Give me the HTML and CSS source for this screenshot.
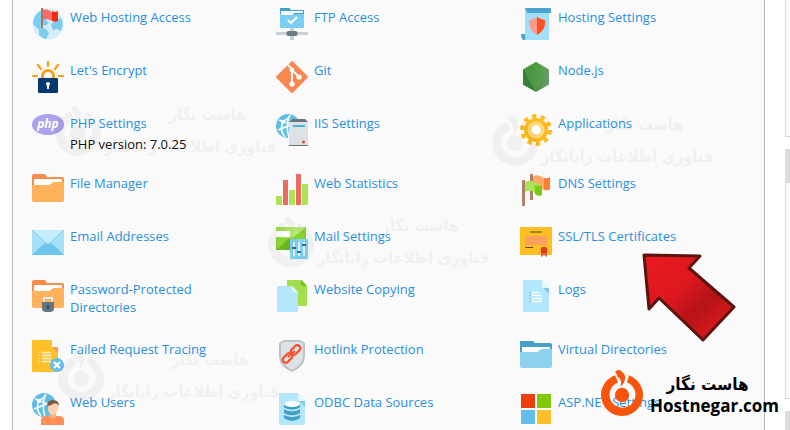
FILE: index.html
```html
<!DOCTYPE html>
<html lang="en">

<head>
    <meta charset="UTF-8">
    <meta name="viewport" content="width=device-width, initial-scale=1.0">
    <title>Websites &amp; Domains</title>

    <link rel="stylesheet" href="styles.css">
</head>

<body>
    <!-- shared shapes -->
    <svg class="defs" aria-hidden="true">
        <defs>
            <linearGradient id="nodeFill" x1="0" y1="0" x2="1" y2="0">
                <stop offset="0.3" stop-color="#3c873a"/>
                <stop offset="1" stop-color="#6f9f6c"/>
            </linearGradient>
            <linearGradient id="arrowFill" x1="0" y1="0" x2="1" y2="1">
                <stop offset="0" stop-color="#ea1a20"/>
                <stop offset="0.4" stop-color="#dc181e"/>
                <stop offset="0.62" stop-color="#b41318"/>
                <stop offset="0.85" stop-color="#d8181c"/>
            </linearGradient>
            <linearGradient id="mailFill" x1="0" y1="0" x2="1" y2="0">
                <stop offset="0" stop-color="#9bdd4a"/>
                <stop offset="1" stop-color="#c8ee8c"/>
            </linearGradient>
            <symbol id="mark" viewBox="0 0 44 46">
                <path d="M15 5.200A21 21 0 1 0 29 5.200L27 12.500A13 13 0 1 1 18 12.500Z"/>
                <circle cx="22" cy="25" r="7.200"/>
                <path d="M15 2C18 -1 21 0 22 2C26 4 27 10 20.500 17C22 11 20.500 8 17 6.500C17 4 16 3 15 2Z"/>
            </symbol>
            <symbol id="globe" viewBox="0 0 24 24">
                <circle cx="12" cy="12" r="12" fill="#5ebde6"/>
                <path d="M3 6Q10 9 14 1M2 16Q12 11 23 9M14 1Q9 11 13 24M7 8Q3 16 9 23M7 8Q14 8 22 18" fill="none" stroke="#fafafa" stroke-width="1.6"/>
                <circle cx="7" cy="8" r="2" fill="#fafafa"/>
            </symbol>
        </defs>
    </svg>

    <div class="page">
        <main class="panel">
            <ul class="tools">
                <li class="tool">
                    <svg class="icon" viewBox="0 0 32 32"><circle cx="16" cy="16" r="15.5" fill="#d3eefa"/><path d="M2 10Q6 2 12 2L17 4L18 9L14 12L17 15L13 18L10 16L8 18L14 21L17 25L14 31Q10 30 7 27L7 22L4 19L1 16ZM22 13L29 10L31 16L29 23L25 21L21 22L19 17Z" fill="#7ccdec"/><path d="M10 2Q15 0 18 3T26 3V13Q22 14 18 12T10 12Z" fill="#ff6b6b"/><path d="M20 3Q23 5 26 3V13Q23 14 20 13Z" fill="#f02c10"/><path d="M9 0H11V20H9Z" fill="#a5785f"/></svg>
                    <div><a href="#">Web Hosting Access</a></div>
                </li>
                <li class="tool">
                    <svg class="icon" viewBox="0 0 32 32"><path d="M4 1Q4 0 5 0H13L15 2H27Q28 2 28 3V19Q28 20 27 20H5Q4 20 4 19Z" fill="#79cff3"/><path d="M4 1Q4 0 5 0H13L15 2H28V6H4Z" fill="#469fc8"/><path d="M5 3H27V5H18L16 7H5Z" fill="#fff"/><path d="M12 12L15 15L21 9" fill="none" stroke="#fff" stroke-width="2"/><path d="M0 24H32V27H0ZM14 20H18V32H14Z" fill="#c7d0d5"/><path d="M12 23H20L21.500 24V27L20 28H12L10.500 27V24Z" fill="#6c7a84"/></svg>
                    <div><a href="#">FTP Access</a></div>
                </li>
                <li class="tool">
                    <svg class="icon" viewBox="0 0 32 32"><path d="M5 0H29V32H3L5 28Z" fill="#a0e0fa"/><path d="M5 0H30Q31 0 31 1V5H28V5H7Z" fill="#4ba3d0"/><path d="M1 26H5V32H3Q1 30 1 26Z" fill="#4ba3d0"/><path d="M17 9Q22 12 25 12Q26 22 17 27Q8 22 9 12Q13 12 17 9Z" fill="#ff9a8b"/><path d="M17 9Q22 12 25 12Q26 22 17 27Z" fill="#ff5022"/></svg>
                    <div><a href="#">Hosting Settings</a></div>
                </li>

                <li class="tool">
                    <svg class="icon" viewBox="0 0 32 32"><path d="M10.500 18V15A5.500 5.500 0 0 1 21.500 15V18" fill="none" stroke="#f9a01b" stroke-width="3"/><path d="M16 1V5M6 4L9 8M26 4L23 8M1 15H5M27 15H31" stroke="#f9a01b" stroke-width="2.200" stroke-linecap="round"/><rect x="6" y="17" width="20" height="15" rx="1" fill="#003a70"/><circle cx="16" cy="23" r="2" fill="#fff"/><path d="M15 23H17V28H15Z" fill="#fff"/></svg>
                    <div><a href="#">Let's Encrypt</a></div>
                </li>
                <li class="tool">
                    <svg class="icon" viewBox="0 0 32 32"><path d="M14.500 1.500Q16 -1 17.500 1L31 14.500Q33 16 31 17.500L17.500 31Q16 33 14.500 31L1 17.500Q-1 16 1 14.500Z" fill="#f88750"/><path d="M12 4L16 8V23M16 9L23 16" fill="none" stroke="#fff" stroke-width="1.800"/><circle cx="16" cy="9" r="2.400" fill="#fff"/><circle cx="16" cy="23" r="2.600" fill="#fff"/><circle cx="23" cy="16" r="2.600" fill="#fff"/></svg>
                    <div><a href="#">Git</a></div>
                </li>
                <li class="tool">
                    <svg class="icon" viewBox="0 0 32 32"><path d="M16 1L29 8.500V23.500L16 31L3 23.500V8.500Z" fill="url(#nodeFill)"/><path d="M16 1L26 7L17 30L3 23.500V8.500Z" fill="#55a344" opacity="0.600"/><path d="M4 9L15 30L3 23.500V8.500Z" fill="#39813a"/></svg>
                    <div><a href="#">Node.js</a></div>
                </li>

                <li class="tool">
                    <svg class="icon" viewBox="0 0 32 32"><ellipse cx="16" cy="10.500" rx="16" ry="10.500" fill="#aaa2ec"/><text x="16" y="14" class="php" text-anchor="middle">php</text></svg>
                    <div><a href="#">PHP Settings</a><p>PHP version: 7.0.25</p></div>
                </li>
                <li class="tool">
                    <svg class="icon" viewBox="0 0 32 32"><use href="#globe" width="24" height="24"/><path d="M13 8L15 5H30L32 8V32H13Z" fill="#dbe1e5"/><path d="M13 8L16 5H29L32 8ZM13 31H32V32H13Z" fill="#68747c"/><path d="M17 11H29V13H17Z" fill="#4aafd9"/><circle cx="27.500" cy="28" r="1.500" fill="#f43b2f"/></svg>
                    <div><a href="#">IIS Settings</a></div>
                </li>
                <li class="tool">
                    <svg class="icon" viewBox="0 0 32 32"><circle cx="16" cy="16" r="13.500" fill="none" stroke="#fdbb1f" stroke-width="5" stroke-dasharray="4.240 4.240"/><circle cx="16" cy="16" r="8.500" fill="#fff" stroke="#fdbb1f" stroke-width="7"/><circle cx="16" cy="16" r="7" fill="none" stroke="#ffdc84" stroke-width="3"/></svg>
                    <div><a href="#">Applications</a></div>
                </li>

                <li class="tool">
                    <svg class="icon" viewBox="0 0 32 32"><path d="M0 2Q0 0 2 0H13L15 3H30Q32 3 32 5V20H0Z" fill="#f98b4b"/><path d="M2 6Q2 5 3 5H29Q30 5 30 6V9L20 14H2Z" fill="#fff"/><path d="M0 11H16Q18 11 19 10Q20 8 22 8H32V26Q32 28 30 28H2Q0 28 0 26Z" fill="#ffb15c"/></svg>
                    <div><a href="#">File Manager</a></div>
                </li>
                <li class="tool">
                    <svg class="icon" viewBox="0 0 32 32"><path d="M0 22H6V31H0ZM13 16H19V31H13ZM26 10H32V31H26Z" fill="#aee34f"/><path d="M7 6H12V31H7ZM20 0H25V31H20Z" fill="#ed6a5e"/></svg>
                    <div><a href="#">Web Statistics</a></div>
                </li>
                <li class="tool">
                    <svg class="icon" viewBox="0 0 32 32"><path d="M10 0H13V26H10ZM2 6H5V32H2Z" fill="#b08068"/><path d="M13 2Q18 0 22 3T30 3V15Q26 18 22 15L13 14Z" fill="#ffa868"/><path d="M24 4Q27 5 30 3V15Q27 17 24 15Z" fill="#ff7f35"/><path d="M5 8Q9 5 14 8T22 11V21Q19 23 15 19T5 18Z" fill="#a9e655"/><path d="M15 11Q19 13 22 11V21Q18 23 15 20Z" fill="#7ac812"/></svg>
                    <div><a href="#">DNS Settings</a></div>
                </li>

                <li class="tool">
                    <svg class="icon" viewBox="0 0 32 32"><path d="M0 3H32V28H0Z" fill="#a5e0f8"/><path d="M0 28L16 13L32 28Z" fill="#6ec7ea"/><path d="M0 3H32L18 16Q16 18 14 16Z" fill="#c4edfc"/><path d="M0 3L14 16Q16 18 18 16L32 3" fill="none" stroke="#7fcdec"/></svg>
                    <div><a href="#">Email Addresses</a></div>
                </li>
                <li class="tool">
                    <svg class="icon" viewBox="0 0 32 32"><path d="M0 0H30V23H0Z" fill="#8bd334"/><path d="M0 0H30L15 12L0 10Z" fill="url(#mailFill)"/><path d="M0 23L14 11L30 23Z" fill="#6cbd1c"/><path d="M0 4H14V10H0Z" fill="#fff"/><rect x="14" y="12" width="18" height="20" rx="1" fill="#83d2f3"/><path d="M18 15V29M23 15V29M28 15V29" stroke="#fff" stroke-width="1.500"/><path d="M16 21H20M21 25H25M26 18H30" stroke="#336c99" stroke-width="2"/></svg>
                    <div><a href="#">Mail Settings</a></div>
                </li>
                <li class="tool">
                    <svg class="icon" viewBox="0 0 32 32"><path d="M0 0H32V28H0Z" fill="#fdbf22"/><path d="M10 5H22" stroke="#544a3f"/><path d="M5 9H27V18H5Z" fill="#faa15e"/><path d="M5 20.500H13" stroke="#544a3f"/><path d="M21 24H27V30L24 28L21 30Z" fill="#e26442"/><circle cx="24" cy="23" r="3.300" fill="#d93a2b"/></svg>
                    <div><a href="#">SSL/TLS Certificates</a></div>
                </li>

                <li class="tool">
                    <svg class="icon" viewBox="0 0 32 32"><path d="M0 2Q0 0 2 0H13L15 3H30Q32 3 32 5V20H0Z" fill="#f98b4b"/><path d="M2 6Q2 5 3 5H29Q30 5 30 6V9L20 14H2Z" fill="#fff"/><path d="M0 11H16Q18 11 19 10Q20 8 22 8H32V26Q32 28 30 28H2Q0 28 0 26Z" fill="#ffb15c"/><path d="M12 23V18H20V23" fill="none" stroke="#e8edf0" stroke-width="2"/><path d="M10 22H22V28Q22 32 18 32H14Q10 32 10 28Z" fill="#66737c"/><path d="M16 25V29" stroke="#303b42" stroke-width="1.500"/></svg>
                    <div><a href="#">Password-Protected Directories</a></div>
                </li>
                <li class="tool">
                    <svg class="icon" viewBox="0 0 32 32"><path d="M11 0H26L31 6V25Q31 26 30 26H11Z" fill="#a3df4d"/><path d="M25 0L31 6H25Z" fill="#79bd28"/><path d="M2 6H16L22 12V32H2Q1 32 1 31V7Q1 6 2 6Z" fill="#b2e7fe"/><path d="M16 6L22 12H18Q16 12 16 10Z" fill="#e5f8ff"/></svg>
                    <div><a href="#">Website Copying</a></div>
                </li>
                <li class="tool">
                    <svg class="icon" viewBox="0 0 32 32"><path d="M4 0H22L29 8V31Q29 32 28 32H4Q3 32 3 31V1Q3 0 4 0Z" fill="#b2e7fe"/><path d="M22 0L29 8H23Q22 8 22 7Z" fill="#e8f8ff"/><path d="M23 8H29V14Z" fill="#82c9e8"/><path d="M12 12.500H19M12 15.500H22M12 18.500H22M12 21.500H22" stroke="#fff" stroke-width="1.500"/><path d="M10 12V23" stroke="#5796b8" stroke-dasharray="1 2"/></svg>
                    <div><a href="#">Logs</a></div>
                </li>

                <li class="tool">
                    <svg class="icon" viewBox="0 0 32 32"><path d="M1 0H20L26 7V31Q26 32 25 32H1Q0 32 0 31V1Q0 0 1 0Z" fill="#fdc02a"/><path d="M20 0L26 7H20Z" fill="#fff"/><path d="M20 7H26V13Z" fill="#ef9d51"/><path d="M10 12.500H19M10 15.500H19M10 18.500H19M10 21.500H19" stroke="#fff2cc" stroke-width="1.500"/><path d="M7 12V23" stroke="#fff2cc" stroke-dasharray="1 2"/><circle cx="25" cy="25" r="7" fill="#68bee6"/><path d="M22 22L28 28M28 22L22 28" stroke="#fff" stroke-width="2.200"/></svg>
                    <div><a href="#">Failed Request Tracing</a></div>
                </li>
                <li class="tool">
                    <svg class="icon" viewBox="0 0 32 32"><path d="M8 0H24L29 3V17Q28 27 16 32Q4 27 3 17V3Z" fill="#bac2c8"/><path d="M8 2H24L27 4V17Q26 25 16 30Q6 25 5 17V4Z" fill="#dce2e6"/><g fill="none" stroke="#f5532f" stroke-width="2.200"><rect x="14" y="7" width="11" height="6" rx="3" transform="rotate(-45 19.500 10)"/><rect x="6" y="15" width="11" height="6" rx="3" transform="rotate(-45 11.500 18)"/><path d="M12 17L19 11"/></g></svg>
                    <div><a href="#">Hotlink Protection</a></div>
                </li>
                <li class="tool">
                    <svg class="icon" viewBox="0 0 32 32"><path d="M0 1H13L15 3H30Q32 3 32 5V20H0Z" fill="#469fc8"/><path d="M2 7H30V10L20 14H2Z" fill="#fff"/><path d="M0 12H16Q18 12 19 11Q20 9 22 9H32V26Q32 28 30 28H2Q0 28 0 26Z" fill="#8dd1ee"/></svg>
                    <div><a href="#">Virtual Directories</a></div>
                </li>

                <li class="tool">
                    <svg class="icon" viewBox="0 0 32 32"><use href="#globe" width="24" height="24"/><path d="M9 32V27Q9 23 15 23H26Q32 23 32 27V32Z" fill="#ff8f56"/><path d="M18 20H24V24L21 26L18 24Z" fill="#efb28c"/><ellipse cx="21" cy="15" rx="5" ry="7" fill="#ffcfaf"/><path d="M15 13Q15 7 21 7T27 13Q24 9 21 11T15 13Z" fill="#7a5a48"/></svg>
                    <div><a href="#">Web Users</a></div>
                </li>
                <li class="tool">
                    <svg class="icon" viewBox="0 0 32 32"><path d="M4 0H22L29 8V31Q29 32 28 32H4Q3 32 3 31V1Q3 0 4 0Z" fill="#b2e7fe"/><path d="M22 0L29 8H23Q22 8 22 7Z" fill="#e8f8ff"/><path d="M23 8H29V14Z" fill="#82c9e8"/><path d="M8 10V25Q16 31 24 25V10Z" fill="#459dc5"/><path d="M7 15Q16 20 25 15M7 20.500Q16 26 25 20.500" fill="none" stroke="#b2e7fe" stroke-width="2"/><ellipse cx="16" cy="11" rx="8" ry="3" fill="#fff"/></svg>
                    <div><a href="#">ODBC Data Sources</a></div>
                </li>
                <li class="tool">
                    <svg class="icon" viewBox="0 0 32 32"><path d="M1 1H15V15H1Z" fill="#ee3e0c"/><path d="M17 1H31V15H17Z" fill="#80c80c"/><path d="M1 17H15V31H1Z" fill="#62bde8"/><path d="M17 17H31V31H17Z" fill="#fdc02a"/></svg>
                    <div><a href="#">ASP.NET Settings</a></div>
                </li>
            </ul>
        </main>

        <aside class="sidebar">
            <div class="box box-first"></div>
            <div class="box box-titled"></div>
            <div class="box box-last"></div>
        </aside>
    </div>

    <!-- watermarks -->
    <div class="watermark wm-1" lang="fa" dir="rtl"><svg viewBox="0 0 44 46"><use href="#mark"/></svg><div><p class="wm-name">هاست نگار</p><p>فناوری اطلاعات رایانگار</p></div></div>
    <div class="watermark wm-2" lang="fa" dir="rtl"><svg viewBox="0 0 44 46"><use href="#mark"/></svg><div><p class="wm-name">هاست نگار</p><p>فناوری اطلاعات رایانگار</p></div></div>
    <div class="watermark wm-3" lang="fa" dir="rtl"><svg viewBox="0 0 44 46"><use href="#mark"/></svg><div><p class="wm-name">هاست نگار</p><p>فناوری اطلاعات رایانگار</p></div></div>
    <div class="watermark wm-4" lang="fa" dir="rtl"><svg viewBox="0 0 44 46"><use href="#mark"/></svg><div><p class="wm-name">هاست نگار</p><p>فناوری اطلاعات رایانگار</p></div></div>

    <svg class="arrow" viewBox="0 0 96 92"><path d="M3 3L59 4L48 16L93 55L62 88L18 46L8 57Z" fill="url(#arrowFill)" stroke="#5c1410" stroke-width="3" stroke-linejoin="round"/></svg>

    <div class="brand">
        <svg class="brand-mark" viewBox="0 0 44 46"><use href="#mark"/></svg>
        <div class="brand-text">
            <span class="brand-fa" lang="fa" dir="rtl">هاست نگار</span>
            <span class="brand-en">Hostnegar.com</span>
        </div>
    </div>
</body>

</html>
```
FILE: styles.css
```css
body {
    margin: 0;
    height: 100vh;
    position: relative;
    overflow: hidden;
    background-color: #fff;
    font-family: "Open Sans", "Noto Sans", sans-serif;
    font-size: 13px;
    line-height: 18px;
    color: #111;
}

p {
    margin: 0;
}

a {
    display: inline-block;
    padding-bottom: 3px;
    color: #2a8fe0;
    text-decoration: none;
}

.defs {
    position: absolute;
    width: 0;
    height: 0;
}

.page {
    display: flex;
    gap: 20px;
    height: 100%;
    padding-left: 12px;
}

.panel {
    flex: 1;
    background-color: #fafafa;
    border-left: 1px solid #b8b8b8;
    border-right: 1px solid #b8b8b8;
}

.tools {
    display: grid;
    grid-template-columns: repeat(3, 1fr);
    row-gap: 21px;
    margin: 0;
    padding: 8px 0 0 19px;
    list-style: none;
}

.tool {
    display: flex;
    align-items: flex-start;
    gap: 6px;
    padding-right: 50px;
}

.icon {
    flex: none;
    width: 32px;
    height: 32px;
}

.php {
    font: italic bold 12px "Open Sans", sans-serif;
    fill: #fff;
}

.sidebar {
    display: flex;
    flex-direction: column;
    gap: 12px;
    width: 5px;
    height: 100%;
}

.box {
    flex: none;
    height: 250px;
    box-sizing: border-box;
    border: 1px solid #d8d8d8;
    border-right: none;
    background-color: #fafafa;
}

.box-first {
    height: 137px;
    border-top: none;
}

.box-titled {
    border-top: 34px solid #dcdcdc;
}

/* cut off by the window, so it only shows its title bar */
.box-last {
    flex: 1;
    height: auto;
    border: none;
    background-color: #dcdcdc;
}

.watermark {
    position: absolute;
    display: flex;
    flex-direction: row-reverse;
    align-items: center;
    justify-content: space-between;
    width: 222px;
    opacity: 0.035;
    font: bold 16px/32px "DejaVu Sans Condensed", "DejaVu Sans", sans-serif;
    color: #000;
    white-space: nowrap;
}

.watermark svg {
    flex: none;
    width: 48px;
    height: 50px;
}

.wm-name {
    padding-right: 30px;
}

.wm-1 {
    left: 54px;
    top: 99px;
}

.wm-2 {
    left: 267px;
    top: 210px;
}

.wm-3 {
    left: 491px;
    top: 109px;
}

.wm-4 {
    left: 57px;
    top: 344px;
}

.arrow {
    position: absolute;
    left: 641px;
    top: 252px;
    width: 96px;
    height: 92px;
}

.brand {
    position: absolute;
    right: 11px;
    bottom: 14px;
    display: flex;
    gap: 6px;
    color: #000;
}

.brand-mark {
    width: 44px;
    height: 46px;
    fill: #f7540c;
}

.brand-text {
    display: flex;
    flex-direction: column;
    align-items: center;
    padding-top: 4px;
}

.brand-fa {
    padding-right: 14px;
    font: bold 17px/21px "DejaVu Sans Condensed", "DejaVu Sans", sans-serif;
}

.brand-en {
    font-size: 17px;
    font-weight: bold;
    line-height: 21px;
}
```
